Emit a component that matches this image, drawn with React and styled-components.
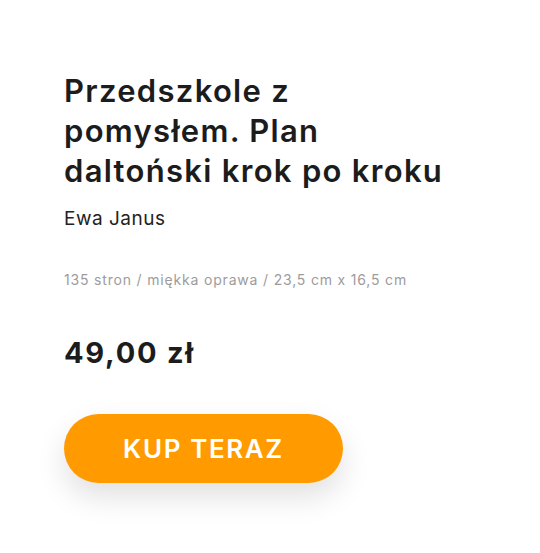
import React from 'react';
import styled, { createGlobalStyle } from 'styled-components';

const GlobalStyle = createGlobalStyle`
  body {
    margin: 0;
    background: #fff;
    font-family: Inter, "Noto Sans", sans-serif;
    color: #1a1a1a;
  }
`;

const Card = styled.div`
  width: 540px;
  height: 553px;
  box-sizing: border-box;
  padding: 71px 64px 0;
  display: flex;
  flex-direction: column;
  align-items: flex-start;
`;

const Title = styled.h1`
  margin: 0;
  font-size: 31px;
  line-height: 40px;
  font-weight: 600;
  letter-spacing: 1.3px;
  color: #1c1c1c;
  max-width: 392px;
`;

const Author = styled.div`
  margin-top: 16px;
  font-size: 19px;
  line-height: 23px;
  letter-spacing: 0.5px;
  color: #222;
`;

const Meta = styled.div`
  margin-top: 41px;
  font-size: 14px;
  line-height: 17px;
  letter-spacing: 0.82px;
  color: #9c9c9c;
`;

const Price = styled.div`
  margin-top: 47px;
  font-size: 29px;
  line-height: 35px;
  font-weight: 700;
  letter-spacing: 1.75px;
  color: #1c1c1c;
`;

const BuyButton = styled.button`
  margin-top: 44px;
  width: 279px;
  height: 69px;
  border: none;
  border-radius: 35px;
  background: #ff9a00;
  color: #fff;
  font-family: inherit;
  font-size: 26px;
  font-weight: 600;
  letter-spacing: 1.6px;
  box-shadow: 0 14px 30px rgba(0, 0, 0, 0.12);
  cursor: pointer;
`;

export default function App() {
  return (
    <>
      <GlobalStyle />
      <Card>
        <Title>Przedszkole z pomysłem. Plan daltoński krok po kroku</Title>
        <Author>Ewa Janus</Author>
        <Meta>135 stron / miękka oprawa / 23,5 cm x 16,5 cm</Meta>
        <Price>49,00 zł</Price>
        <BuyButton>KUP TERAZ</BuyButton>
      </Card>
    </>
  );
}
